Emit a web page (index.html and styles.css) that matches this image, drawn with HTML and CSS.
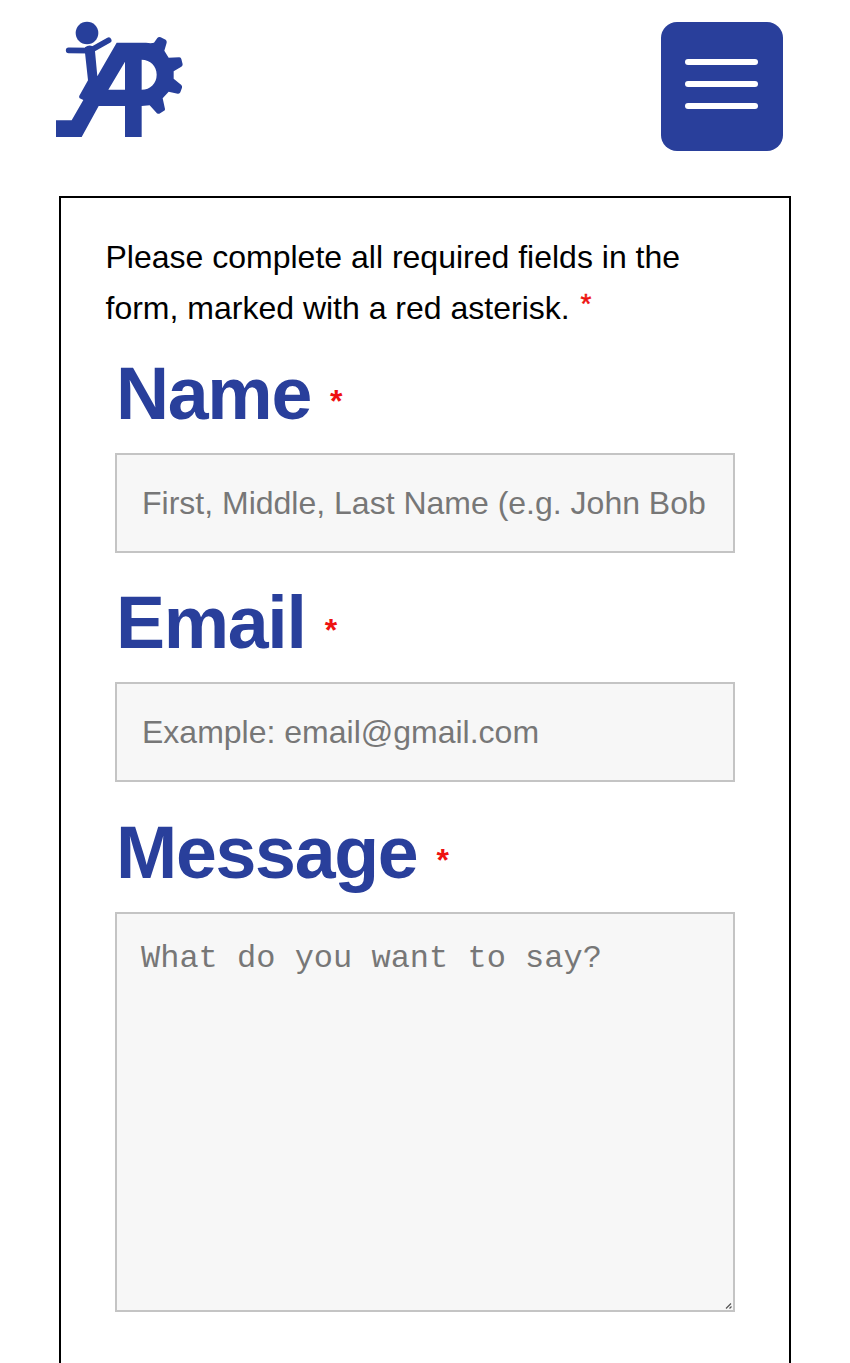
FILE: index.html
```html
<!DOCTYPE html>
<html lang="en">
<head>
<meta charset="utf-8">
<title>Contact</title>
<link rel="stylesheet" href="styles.css">
</head>
<body>
<header class="header">
  <svg class="logo" viewBox="48 30 384 354" role="img" aria-label="Logo">
    <circle cx="141" cy="69" r="34"/>
    <path class="limb" d="M86 121L150 122L206 91"/>
    <path d="M135 112Q148 101 163 111L165 124L172 199L230 98H318L332 100L342 98L352 84Q356 80 362 82L377 89Q381 92 380 98L373 122L386 143L418 142Q423 142 424 147L428 163Q428 168 424 170L401 184V206L424 225Q427 228 426 233L421 247Q419 252 413 251L386 245L368 265L375 297Q376 301 371 303L358 311Q352 313 348 307L329 286L305 288V381H255V288H176L125 381H48V331H95L130 270L119 265Q116 261 118 257L144 211L135 128ZM255 155L205 239H255ZM305 149V239C331 239 350 220 350 194S331 149 305 149Z" fill-rule="evenodd"/>
  </svg>
  <button class="menu" aria-label="Menu">
    <span class="bar"></span>
    <span class="bar"></span>
    <span class="bar"></span>
  </button>
</header>
<form class="form">
  <p class="intro">Please complete all required fields in the<br>form, marked with a red asterisk. <span class="required">*</span></p>
  <div class="field">
    <label class="label" for="name">Name <span class="required">*</span></label>
    <input class="control" id="name" type="text" placeholder="First, Middle, Last Name (e.g. John Bob">
  </div>
  <div class="field">
    <label class="label" for="email">Email <span class="required">*</span></label>
    <input class="control" id="email" type="email" placeholder="Example: email@gmail.com">
  </div>
  <div class="field">
    <label class="label" for="message">Message <span class="required">*</span></label>
    <div class="message-box">
      <textarea class="control message" id="message" placeholder="What do you want to say?"></textarea>
      <svg class="grip" viewBox="0 0 8 8"><path d="M1 6.5L6 1.5M4.5 6.5L6.5 4.5"/></svg>
    </div>
  </div>
</form>
</body>
</html>
```
FILE: styles.css
```css
* {
  box-sizing: border-box;
}

body {
  display: flex;
  flex-direction: column;
  margin: 0;
  height: 1363px;
  background: #fff;
  color: #000;
  font-family: "Liberation Sans", Arial, sans-serif;
}

.header {
  display: flex;
  flex: none;
  justify-content: space-between;
  align-items: flex-start;
  height: 196.4px;
  padding: 20px 67px 0 56px;
}

.logo {
  width: 128px;
  height: 118px;
  fill: #273f9b;
}

.limb {
  fill: none;
  stroke: #273f9b;
  stroke-width: 17;
  stroke-linecap: round;
  stroke-linejoin: round;
}

.menu {
  display: flex;
  flex-direction: column;
  align-items: center;
  gap: 16px;
  width: 122.5px;
  height: 129px;
  margin-top: 2px;
  padding: 36.5px 0 0;
  border: 0;
  border-radius: 16px;
  background: #293f9b;
}

.bar {
  width: 73px;
  height: 6.2px;
  border-radius: 3.1px;
  background: #fff;
}

.form {
  flex: 1;
  min-height: 0;
  width: 732px;
  margin-left: 59px;
  padding: 34px 55px 0 44.5px;
  border: 2px solid #000;
  border-bottom: 0;
}

.intro {
  margin: 0;
  font-size: 32px;
  line-height: 51px;
  white-space: nowrap;
}

.required {
  color: #ee1111;
  font-size: 32px;
  line-height: 1;
}

.intro .required {
  position: relative;
  top: -6px;
  margin-left: 2px;
  font-size: 28px;
  -webkit-text-stroke: 0.5px #ee1111;
}

.field {
  height: 229.3px;
  padding-left: 9.5px;
}

.field:last-child {
  height: auto;
}

.label {
  display: block;
  height: 118.7px;
  padding: 18.7px 0 0 1px;
  color: #293f9b;
  font-size: 73.5px;
  font-weight: bold;
  letter-spacing: -1.3px;
  line-height: 82px;
  white-space: nowrap;
}

.label .required {
  position: relative;
  top: -7px;
  margin-left: 0;
  letter-spacing: 0;
}

.control {
  display: block;
  width: 620px;
  height: 100px;
  margin: 0;
  padding: 0 25px;
  border: 2px solid #c4c4c4;
  border-radius: 0;
  background: #f7f7f7;
  font: 32px "Liberation Sans", Arial, sans-serif;
}

.control::placeholder {
  color: #777;
  opacity: 1;
}

.message-box {
  position: relative;
  width: 620px;
}

.message {
  height: 400.5px;
  padding: 26px 24px;
  font-family: "Liberation Mono", "Courier New", monospace;
  resize: none;
}

.grip {
  position: absolute;
  right: 2px;
  bottom: 2px;
  width: 8px;
  height: 8px;
  fill: none;
  stroke: #555;
  stroke-width: 1.2;
}
```
